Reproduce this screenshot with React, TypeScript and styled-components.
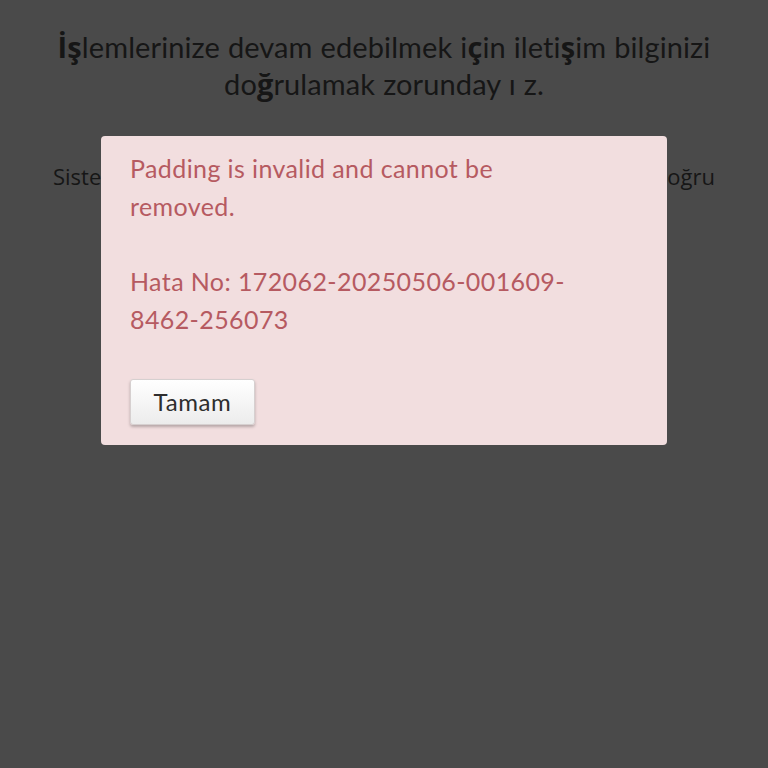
import React from "react";
import styled, { createGlobalStyle } from "styled-components";

const Global = createGlobalStyle`
  html, body { margin: 0; padding: 0; background: #4a4a4a; }
  body { font-family: "Lato", "Open Sans", sans-serif; }
`;

const Page = styled.div`
  width: 768px;
  height: 768px;
  position: relative;
  overflow: hidden;
  background: #4a4a4a;
`;

const Content = styled.div`
  display: flex;
  flex-direction: column;
  align-items: center;
  padding: 28px 53px 0;
`;

const Heading = styled.h1`
  margin: 0;
  font-family: "Lato", sans-serif;
  font-weight: 400;
  font-size: 29px;
  line-height: 37px;
  letter-spacing: 0.1px;
  word-spacing: 0.5px;
  color: #161616;
  text-align: center;
`;

const Fallback = styled.b`
  font-family: "Open Sans", sans-serif;
  font-weight: 700;
`;

const Info = styled.div`
  margin-top: 57px;
  width: 662px;
  font-family: "Open Sans", sans-serif;
  font-size: 22px;
  line-height: 34px;
  color: #161616;
`;

const InfoLine = styled.div<{ $justify?: boolean }>`
  text-align: ${(p) => (p.$justify ? "justify" : "center")};
  text-align-last: ${(p) => (p.$justify ? "justify" : "center")};
`;

const Dialog = styled.div`
  position: absolute;
  left: 101px;
  top: 136px;
  width: 566px;
  box-sizing: border-box;
  padding: 14px 29px 20px;
  background: #f2dedf;
  border-radius: 4px;
  display: flex;
  flex-direction: column;
  align-items: flex-start;
`;

const Message = styled.div`
  font-family: "Lato", sans-serif;
  font-size: 25px;
  line-height: 37.8px;
  letter-spacing: 0.4px;
  color: #b65a61;
  white-space: nowrap;
`;

const Button = styled.button`
  margin-top: 40px;
  width: 125px;
  height: 46px;
  border: 1px solid #d6d0d0;
  border-radius: 3px;
  background: linear-gradient(#ffffff, #ececec);
  box-shadow: 0 2px 3px rgba(0, 0, 0, 0.25);
  font-family: "Lato", sans-serif;
  font-size: 24px;
  letter-spacing: 0.6px;
  color: #2e2e2e;
  padding: 0;
`;

export default function App() {
  return (
    <Page>
      <Global />
      <Content>
        <Heading>
          <Fallback>İş</Fallback>lemlerinize devam edebilmek i<Fallback>ç</Fallback>in ileti
          <Fallback>ş</Fallback>im bilginizi
          <br />
          do<Fallback>ğ</Fallback>rulamak zorunday ı z.
        </Heading>
        <Info>
          <InfoLine $justify>Sistemde kayıtlı iletişim bilgilerinizin doğru</InfoLine>
          <InfoLine>olduğunu onaylayınız.</InfoLine>
        </Info>
      </Content>
      <Dialog role="alertdialog">
        <Message>
          Padding is invalid and cannot be
          <br />
          removed.
          <br />
          <br />
          Hata No: 172062-20250506-001609-
          <br />
          8462-256073
        </Message>
        <Button>Tamam</Button>
      </Dialog>
    </Page>
  );
}
